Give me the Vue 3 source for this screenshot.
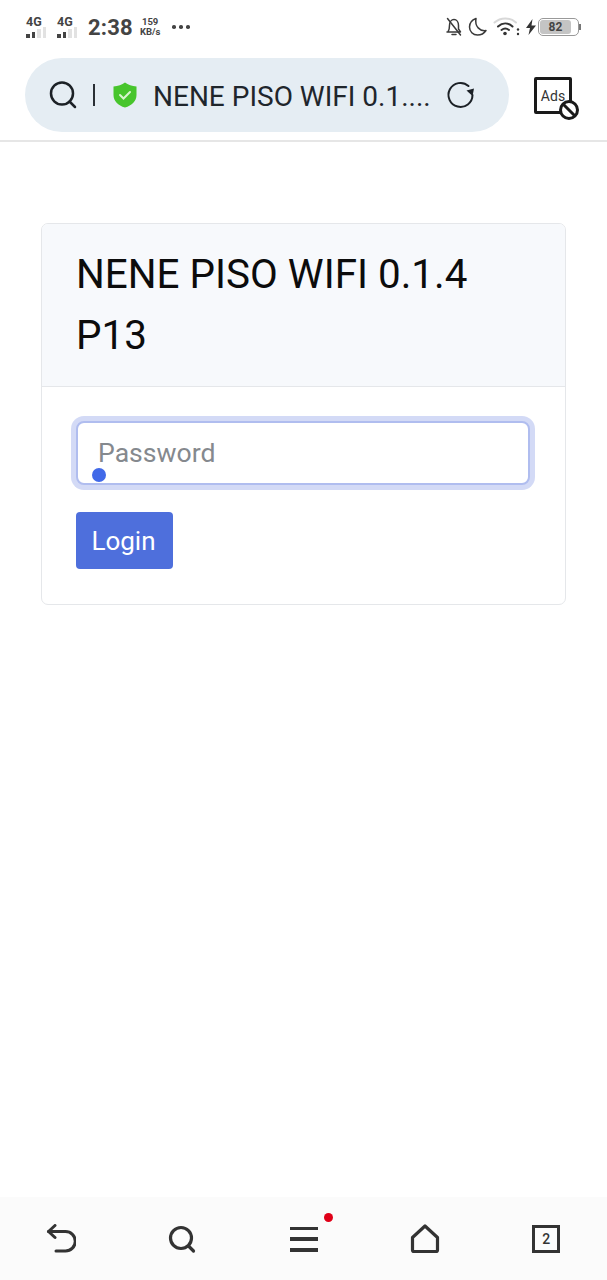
<script setup>
const bars = [1, 2]
</script>

<template>
  <div class="page">
    <div class="status">
      <div class="status-left">
        <div v-for="b in bars" :key="b" class="net">
          <span class="net-label">4G</span>
          <span class="net-bars"><i class="on h1"></i><i class="on h2"></i><i class="h3"></i><i class="h4"></i></span>
        </div>
        <span class="clock">2:38</span>
        <span class="speed"><b>159</b><b>KB/s</b></span>
        <span class="dots"><i></i><i></i><i></i></span>
      </div>
      <div class="status-right">
        <svg class="bell" width="18" height="20" viewBox="0 0 18 20" fill="none" stroke="#3a3a3a" stroke-width="1.5">
          <path d="M3 15c1-1.500 1.500-3 1.500-6.500C4.500 5 6.500 2.500 9 2.500s4.500 2.500 4.500 6V12l2 3H2z" stroke-linejoin="round" />
          <path d="M7 17.500h4M2.500 1.500l13 16.500" stroke-linecap="round" />
        </svg>
        <svg class="moon" width="20" height="20" viewBox="0 0 20 20" fill="none" stroke="#3a3a3a" stroke-width="1.500">
          <path d="M8 1.500C4 3 1.500 6 1.500 10c0 4.500 3.500 8 8 8 3.500 0 6.500-1.500 8.500-4.500-6 1-11.500-4-10-12z" stroke-linejoin="round" />
        </svg>
        <svg class="wifi" width="28" height="20" viewBox="0 0 28 20" fill="none" stroke="#333" stroke-width="2" stroke-linecap="round">
          <path d="M1.500 5.500C7.500 0 17 0 23 5.500" stroke="#d8d8d8" />
          <path d="M5 9.500c4.500-4 10-4 14.500 0" />
          <path d="M8.500 13c2.500-2 5-2 7.500 0" />
          <circle cx="12" cy="16.500" r="1.800" fill="#333" stroke="none" />
          <circle cx="25" cy="12.500" r="1.200" fill="#333" stroke="none" />
          <circle cx="25" cy="17" r="1.200" fill="#333" stroke="none" />
        </svg>
        <svg class="bolt" width="10" height="16" viewBox="0 0 10 16"><path d="M6.500 0L0 9h4L2.500 16 10 6.500H5.500z" fill="#333" /></svg>
        <div class="battery"><span class="level">82</span><span class="nub"></span></div>
      </div>
    </div>

    <div class="toolbar">
      <div class="pill">
        <svg class="ic-search" width="30" height="30" viewBox="0 0 30 30" fill="none" stroke="#1c2126" stroke-width="2.500" stroke-linecap="round">
          <circle cx="14" cy="13.500" r="11" />
          <path d="M21.500 21.500l5.500 5.500" />
        </svg>
        <span class="sep"></span>
        <svg class="shield" width="24" height="26" viewBox="0 0 24 26">
          <path d="M12 0.500C15 3 19 4 23.500 4.500V13c0 6-4.500 10.500-11.500 12.500C5 23.500 0.500 19 0.500 13V4.500C5 4 9 3 12 0.500z" fill="#47c52c" />
          <path d="M7 13l3.500 3.500L17 10" fill="none" stroke="#d8f5cf" stroke-width="2" stroke-linecap="round" />
        </svg>
        <span class="url">NENE PISO WIFI 0.1....</span>
        <svg class="reload" width="30" height="30" viewBox="0 0 30 30" fill="none">
          <path d="M26.500 15a12 12 0 1 1-4-9" stroke="#1c2126" stroke-width="2" stroke-linecap="round" />
          <path d="M28 8.500l-1.500 7.500-6-5.500z" fill="#1c2126" />
        </svg>
      </div>
      <div class="ads">
        <span class="ads-text">Ads</span>
        <svg class="ads-block" width="22" height="22" viewBox="0 0 22 22" fill="#fff" stroke="#1a1a1a" stroke-width="3">
          <circle cx="11" cy="11" r="8.500" />
          <path d="M5 5l12 12" />
        </svg>
      </div>
    </div>

    <div class="content">
      <div class="card">
        <div class="card-header">NENE PISO WIFI 0.1.4 P13</div>
        <div class="card-body">
          <div class="field">
            <input class="input" type="password" placeholder="Password" />
            <span class="handle"></span>
          </div>
          <button class="login">Login</button>
        </div>
      </div>
    </div>

    <div class="bottom">
      <div class="cell">
        <svg width="30" height="30" viewBox="0 0 30 30" fill="none" stroke="#333" stroke-width="3" stroke-linecap="round" stroke-linejoin="round">
          <path d="M2.500 7.500h17a8.500 8.500 0 0 1 0 19.500H10" />
          <path d="M9 1.500L2.500 7.500 9 13.500" />
        </svg>
      </div>
      <div class="cell">
        <svg width="30" height="30" viewBox="0 0 30 30" fill="none" stroke="#333" stroke-width="3.200" stroke-linecap="round">
          <circle cx="14" cy="14" r="10.500" />
          <path d="M22 22.500l4.500 4.500" />
        </svg>
      </div>
      <div class="cell">
        <div class="menu">
          <i></i><i></i><i></i>
          <span class="red"></span>
        </div>
      </div>
      <div class="cell">
        <svg width="30" height="30" viewBox="0 0 30 30" fill="none" stroke="#333" stroke-width="3.200" stroke-linejoin="round">
          <path d="M15 2L27.500 13.500v12.500a1.500 1.500 0 0 1-1.500 1.500H4A1.500 1.500 0 0 1 2.500 26V13.500z" />
        </svg>
      </div>
      <div class="cell">
        <div class="tabs">2</div>
      </div>
    </div>
  </div>
</template>

<style>
body {
  margin: 0;
  background: #fff;
}
</style>

<style scoped>
.page {
  width: 607px;
  height: 1280px;
  display: flex;
  flex-direction: column;
  font-family: Roboto, "Liberation Sans", sans-serif;
  overflow: hidden;
  background: #fff;
}

.status {
  height: 50px;
  box-sizing: border-box;
  padding: 14px 28px 0 26px;
  display: flex;
  justify-content: space-between;
  align-items: flex-start;
}

.status-left, .status-right {
  display: flex;
  align-items: center;
  height: 26px;
}

.net {
  width: 24px;
  margin-right: 7px;
  display: flex;
  flex-direction: column;
  color: #444;
}

.net-label {
  font-size: 12.5px;
  font-weight: 700;
  line-height: 11px;
}

.net-bars {
  display: flex;
  align-items: flex-end;
  gap: 2px;
  height: 11px;
}

.net-bars i {
  width: 3.500px;
  background: #e2e2e2;
}

.net-bars i.on {
  background: #444;
}

.h1 { height: 4px; }
.h2 { height: 6px; }
.h3 { height: 9px; }
.h4 { height: 11px; }

.clock {
  font-size: 22px;
  font-weight: 700;
  color: #444;
  letter-spacing: 0.2px;
}

.speed {
  display: flex;
  flex-direction: column;
  align-items: center;
  margin-left: 7px;
  color: #444;
}

.speed b {
  font-size: 9.500px;
  line-height: 10px;
}

.dots {
  display: flex;
  gap: 3.500px;
  margin-left: 12px;
}

.dots i {
  width: 3.500px;
  height: 3.500px;
  border-radius: 50%;
  background: #444;
}

.status-right .bell {
  margin-right: 5px;
}

.status-right .moon {
  margin-right: 5px;
}

.status-right .wifi {
  margin-right: 5px;
}

.status-right .bolt {
  margin-right: 2px;
}

.battery {
  width: 37px;
  height: 14px;
  padding: 1px;
  border: 1px solid #999;
  border-radius: 5px;
  position: relative;
}

.level {
  display: block;
  width: 31px;
  height: 14px;
  border-radius: 3px;
  background: #c4c4c4;
  color: #444;
  font-size: 12px;
  font-weight: 700;
  line-height: 14px;
  text-align: center;
}

.nub {
  position: absolute;
  right: -3px;
  top: 5px;
  width: 2px;
  height: 6px;
  background: #777;
}

.toolbar {
  height: 92px;
  box-sizing: border-box;
  padding: 8px 35px 0 25px;
  border-bottom: 2px solid #e6e6e6;
  display: flex;
  align-items: flex-start;
  justify-content: space-between;
}

.pill {
  width: 484px;
  height: 74px;
  box-sizing: border-box;
  padding: 0 33px 0 23px;
  border-radius: 37px;
  background: #e5edf3;
  display: flex;
  align-items: center;
}

.sep {
  width: 2px;
  height: 22px;
  background: #2a2f34;
  margin-left: 15px;
}

.shield {
  margin-left: 18px;
  flex-shrink: 0;
}

.url {
  margin-left: 16px;
  padding-top: 2px;
  font-size: 28px;
  color: #1f262c;
  white-space: nowrap;
  flex: 1;
}

.ads {
  width: 38px;
  height: 37px;
  box-sizing: border-box;
  border: 3px solid #1a1a1a;
  border-radius: 2px;
  margin-top: 19px;
  position: relative;
  display: flex;
  align-items: center;
  justify-content: center;
}

.ads-text {
  font-size: 14px;
  color: #333;
  margin-top: 1px;
}

.ads-block {
  position: absolute;
  right: -11px;
  bottom: -10px;
}

.content {
  flex: 1;
  padding: 81px 41px 0 41px;
}

.card {
  width: 525px;
  height: 382px;
  box-sizing: border-box;
  border: 1.500px solid #e5e7ea;
  border-radius: 7px;
  overflow: hidden;
  background: #fff;
}

.card-header {
  height: 163px;
  box-sizing: border-box;
  padding: 20px 35px 0 34px;
  background: #f7f9fc;
  border-bottom: 1.500px solid #e5e7ea;
  font-size: 40.400px;
  line-height: 61px;
  color: #0c0c0c;
}

.card-body {
  padding: 34px 34px;
}

.field {
  position: relative;
  width: 454px;
  height: 64px;
}

.input {
  width: 100%;
  height: 100%;
  box-sizing: border-box;
  padding: 0 20px 2px;
  border: 2px solid #b0bdef;
  border-radius: 8px;
  box-shadow: 0 0 0 5px #d3daf6;
  outline: none;
  font-family: inherit;
  font-size: 26.600px;
  background: #fff;
  color: #333;
}

.input::placeholder {
  color: #85898e;
  opacity: 1;
}

.handle {
  position: absolute;
  left: 16px;
  top: 47px;
  width: 14px;
  height: 14px;
  border-radius: 50%;
  background: #4169e8;
}

.login {
  display: block;
  margin-top: 27px;
  width: 97px;
  height: 57px;
  border: none;
  border-radius: 4px;
  background: #4e6fdc;
  color: #fff;
  font-family: inherit;
  font-size: 26px;
  padding: 0 2px 0 0;
}

.bottom {
  height: 83px;
  box-sizing: border-box;
  padding-top: 1px;
  background: #fbfbfb;
  display: flex;
  align-items: center;
}

.cell {
  flex: 1;
  display: flex;
  justify-content: center;
  align-items: center;
}

.menu {
  width: 28px;
  height: 25px;
  display: flex;
  flex-direction: column;
  justify-content: space-between;
  position: relative;
}

.menu i {
  display: block;
  height: 3.500px;
  background: #333;
}

.red {
  position: absolute;
  right: -15px;
  top: -14px;
  width: 9px;
  height: 9px;
  border-radius: 50%;
  background: #e00018;
}

.tabs {
  width: 28px;
  height: 28px;
  outline: 3.500px solid #333;
  outline-offset: -3.500px;
  display: flex;
  align-items: center;
  justify-content: center;
  font-size: 14px;
  font-weight: 500;
  color: #333;
}
</style>
